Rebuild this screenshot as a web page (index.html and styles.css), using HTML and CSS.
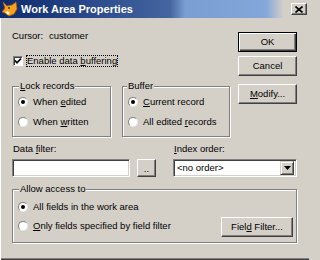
FILE: index.html
```html
<!DOCTYPE html>
<html>
<head>
<meta charset="utf-8">
<link rel="stylesheet" href="styles.css">
</head>
<body>
<div class="window">
  <div class="titlebar">
    <svg class="app-icon" width="16" height="16" viewBox="0 0 16 16">
      <polygon points="1,1 5,5 10,4 14,1 15,8 12,13 7,15 3,12 0,11 3,7" fill="#f6a21e" stroke="#b65a00" stroke-width="0.8"/>
      <polygon points="3,11 6,10 8,12 6,14" fill="#fff2c0"/>
      <circle cx="7" cy="7" r="1" fill="#5a2a00"/>
    </svg>
    <span class="title">Work Area Properties</span>
    <span class="close">
      <svg width="8" height="7" viewBox="0 0 8 7"><path d="M0.5 0.5 L7.5 6.5 M7.5 0.5 L0.5 6.5" stroke="#000" stroke-width="1.6"/></svg>
    </span>
  </div>
  <div class="client">
    <div class="top">
      <div class="left">
        <div class="line cursor-line"><span class="cursor-lbl">Cursor:</span><span>customer</span></div>
        <div class="check-row">
          <span class="checkbox">
            <svg width="8" height="8" viewBox="0 0 8 8"><polyline points="1,3.5 3,5.8 7,1.5" fill="none" stroke="#000" stroke-width="1.7"/></svg>
          </span>
          <span class="focus">Enable data <u>b</u>uffering</span>
        </div>
        <div class="groups">
          <fieldset class="group lock">
            <legend><u>L</u>ock records</legend>
            <div class="group-body">
              <div class="radio-row"><span class="radio checked"></span><span>When <u>e</u>dited</span></div>
              <div class="radio-row"><span class="radio"></span><span>When <u>w</u>ritten</span></div>
            </div>
          </fieldset>
          <fieldset class="group buffer">
            <legend>Buffer</legend>
            <div class="group-body">
              <div class="radio-row"><span class="radio checked"></span><span><u>C</u>urrent record</span></div>
              <div class="radio-row"><span class="radio"></span><span>All edited <u>r</u>ecords</span></div>
            </div>
          </fieldset>
        </div>
      </div>
      <div class="buttons">
        <div class="btn default"><span>OK</span></div>
        <div class="btn"><span>Cancel</span></div>
        <div class="btn modify"><span><u>M</u>odify...</span></div>
      </div>
    </div>
    <div class="filters">
      <span class="lbl">Data <u>f</u>ilter:</span>
      <span class="lbl idx-lbl"><u>I</u>ndex order:</span>
      <div class="textbox"></div>
      <div class="btn dots"><span>..</span></div>
      <div class="select">
        <span class="sel-text">&lt;no order&gt;</span>
        <span class="drop">
          <svg width="7" height="4" viewBox="0 0 7 4"><polygon points="0,0 7,0 3.5,4" fill="#000"/></svg>
        </span>
      </div>
    </div>
    <fieldset class="group access">
      <legend>Allow access to</legend>
      <div class="access-body">
        <div class="access-radios">
          <div class="radio-row"><span class="radio checked"></span><span>All fields in the work area</span></div>
          <div class="radio-row"><span class="radio"></span><span><u>O</u>nly fields specified by field filter</span></div>
        </div>
        <div class="btn field-filter"><span>Fiel<u>d</u> Filter...</span></div>
      </div>
    </fieldset>
  </div>
</div>
</body>
</html>
```

FILE: styles.css
```css
html, body {
  margin: 0;
  padding: 0;
  background: #d4d0c8;
}

body {
  font-family: "Liberation Sans", Arial, sans-serif;
  font-size: 9.5px;
  line-height: 12px;
  color: #000;
}

u {
  text-decoration: underline;
  text-underline-offset: 1px;
}

.window {
  width: 309px;
  height: 260px;
  background: #d4d0c8;
  box-shadow: inset 1px 0 0 #ffffff, inset 0 -1px 0 #404040, inset 0 -2px 0 #808080;
  overflow: hidden;
}

.titlebar {
  height: 18px;
  display: flex;
  align-items: center;
  background: linear-gradient(to right, #0c2a6c 0px, #2a4a8c 90px, #44659f 170px, #7a9dd2 185px, #84a7da 266px, #d4d0c8 284px);
}

.app-icon {
  margin-left: 2px;
  flex: none;
}

.title {
  margin-left: 3px;
  color: #fff;
  font-weight: bold;
  font-size: 11px;
  white-space: nowrap;
}

.close {
  margin-left: auto;
  margin-right: 2px;
  width: 16px;
  height: 12px;
  box-sizing: border-box;
  display: flex;
  align-items: center;
  justify-content: center;
  background: #d4d0c8;
  border: 1px solid;
  border-color: #ffffff #404040 #404040 #ffffff;
  box-shadow: inset -1px -1px 0 #808080;
}

.client {
  padding: 0 12px;
}

.top {
  display: flex;
  justify-content: space-between;
  align-items: flex-start;
}

.left {
  width: 218px;
  padding-top: 12px;
}

.cursor-line {
  display: flex;
  height: 12px;
}

.cursor-lbl {
  width: 37px;
}

.check-row {
  margin-top: 13px;
  height: 12px;
  display: flex;
  align-items: center;
}

.checkbox {
  margin-left: 1px;
  width: 10px;
  height: 10px;
  box-sizing: border-box;
  background: #fff;
  border: 1px solid;
  border-color: #808080 #ffffff #ffffff #808080;
  box-shadow: inset 1px 1px 0 #404040;
  display: flex;
  align-items: center;
  justify-content: center;
}

.focus {
  margin-left: 3px;
  border: 1px dotted #000;
  line-height: 10px;
  padding: 0;
}

.groups {
  margin-top: 13px;
  display: flex;
  gap: 11px;
}

.group {
  margin: 0;
  padding: 0;
  min-width: 0;
  border: 1px solid #808080;
  box-shadow: 1px 1px 0 #ffffff, inset 1px 1px 0 #ffffff;
}

.group legend {
  margin-left: 6px;
  padding: 0 1px;
  line-height: 12px;
  background: #d4d0c8;
}

.lock {
  width: 99px;
  box-sizing: border-box;
}

.buffer {
  width: 108px;
  box-sizing: border-box;
}

.buffer legend {
  margin-left: 4px;
}

.group-body {
  padding: 4px 0 8px 5px;
  display: flex;
  flex-direction: column;
  gap: 8px;
}

.radio-row {
  display: flex;
  align-items: center;
  height: 12px;
  white-space: nowrap;
}

.radio {
  flex: none;
  width: 10px;
  height: 10px;
  box-sizing: border-box;
  border-radius: 50%;
  background: #fff;
  border: 1px solid;
  border-color: #808080 #e8e8e8 #e8e8e8 #808080;
  margin-right: 5px;
  position: relative;
}

.radio.checked::after {
  content: "";
  position: absolute;
  left: 2px;
  top: 2px;
  width: 4px;
  height: 4px;
  border-radius: 50%;
  background: #000;
}

.buttons {
  width: 59px;
  padding-top: 14px;
  display: flex;
  flex-direction: column;
  gap: 4px;
}

.btn {
  box-sizing: border-box;
  height: 20px;
  display: flex;
  align-items: center;
  justify-content: center;
  background: #d4d0c8;
  border: 1px solid;
  border-color: #ffffff #404040 #404040 #ffffff;
  box-shadow: inset -1px -1px 0 #808080;
  white-space: nowrap;
}

.btn.default {
  border-color: #000;
  box-shadow: inset 1px 1px 0 #ffffff, inset -1px -1px 0 #404040, inset -2px -2px 0 #808080;
}

.btn.modify {
  margin-top: 4px;
}

.filters {
  margin-top: 6px;
  display: grid;
  grid-template-columns: 118px 19px 1fr;
  column-gap: 7px;
  row-gap: 4px;
}

.lbl {
  line-height: 12px;
  padding-left: 1px;
}

.idx-lbl {
  grid-column: 3;
  justify-self: end;
  width: 124px;
  box-sizing: border-box;
  padding-left: 1px;
}

.textbox,
.select {
  height: 18px;
  box-sizing: border-box;
  background: #fff;
  border: 1px solid;
  border-color: #808080 #ffffff #ffffff #808080;
  box-shadow: inset 1px 1px 0 #404040, inset -1px -1px 0 #d4d0c8;
}

.btn.dots {
  height: 18px;
  align-items: flex-end;
  padding-bottom: 3px;
  line-height: 8px;
}

.select {
  grid-column: 3;
  justify-self: end;
  width: 124px;
  display: flex;
  align-items: center;
  padding: 2px;
}

.sel-text {
  padding-left: 1px;
  flex: 1;
}

.drop {
  width: 14px;
  height: 14px;
  box-sizing: border-box;
  display: flex;
  align-items: center;
  justify-content: center;
  background: #d4d0c8;
  border: 1px solid;
  border-color: #d4d0c8 #404040 #404040 #d4d0c8;
  box-shadow: inset 1px 1px 0 #ffffff, inset -1px -1px 0 #808080;
}

.access {
  margin-top: 6px;
  width: 285px;
  box-sizing: border-box;
}

.access-body {
  display: flex;
  justify-content: space-between;
  align-items: flex-start;
  padding: 6px 3px 5px 5px;
}

.access-radios {
  display: flex;
  flex-direction: column;
  gap: 7px;
}

.btn.field-filter {
  margin-top: 16px;
  width: 72px;
}
```
